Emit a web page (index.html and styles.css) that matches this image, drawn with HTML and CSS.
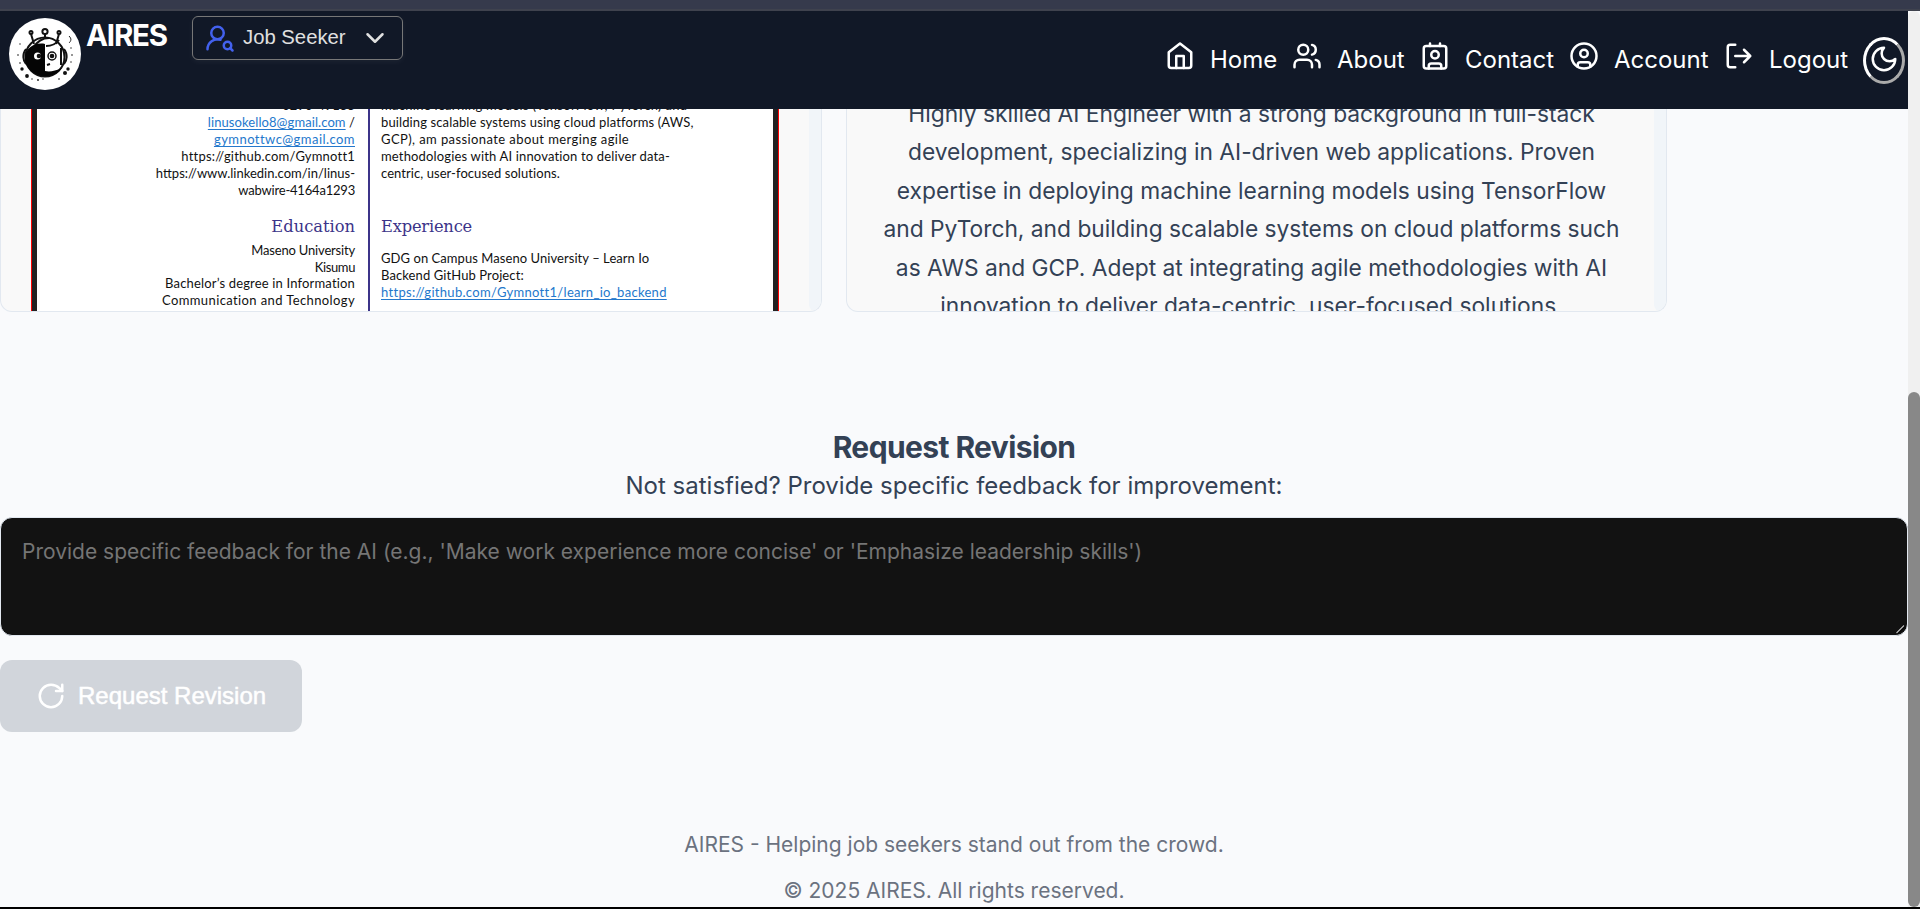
FILE: index.html
```html
<!DOCTYPE html>
<html lang="en">
<head>
<meta charset="utf-8">
<title>AIRES</title>
<link rel="stylesheet" href="styles.css">
</head>
<body>
<div class="window-edge"></div>
<div class="viewport">
  <div class="page">
    <header class="navbar">
      <svg class="logo" viewBox="0 0 72 72">
        <circle cx="36" cy="36" r="36" fill="#fff"/>
        <g fill="none" stroke="#111" stroke-width="2">
          <path d="M25 26L22 16M36 19v-3M47 26l3-10"/>
          <circle cx="22" cy="14.500" r="1.500"/><circle cx="36" cy="13.500" r="2.600"/><circle cx="50" cy="14.500" r="1.500"/>
          <circle cx="36" cy="39" r="19.500"/>
          <path d="M17 31c-4 5-3 12 0 15M55 31c4 5 3 12 0 15M52 30v17"/>
          <path d="M24 30c5-8 10-10 16-10M37 28c6 0 10-2 13-6M38 47l3-1"/>
        </g>
        <path d="M36 26C26 24 16 30 16 40c0 10 9 18 20 18 7 0 12-2 17-8-7 3-12 4-17 3z" fill="#050505"/>
        <circle cx="28.500" cy="38" r="3.500" fill="#fff"/><circle cx="30" cy="38" r="2.300" fill="#111"/>
        <circle cx="43" cy="38" r="4" fill="#fff" stroke="#111" stroke-width="1.500"/><circle cx="43" cy="38" r="2.300" fill="#111"/>
        <g fill="#111">
          <circle cx="13" cy="51" r="1.700"/><circle cx="18" cy="58" r="1.900"/><circle cx="59" cy="51" r="1.700"/><circle cx="56" cy="55" r="2"/>
          <circle cx="11" cy="26" r=".7"/><circle cx="9" cy="37" r=".8"/><circle cx="11" cy="45" r=".8"/><circle cx="62" cy="30" r=".7"/><circle cx="63" cy="37" r=".8"/><circle cx="62" cy="44" r=".7"/><circle cx="29" cy="62" r=".9"/><circle cx="34" cy="61" r=".7"/><circle cx="50" cy="61" r=".8"/><circle cx="23" cy="61" r=".7"/>
        </g>
        <path d="M60 18c3 3 2 5 0 7" fill="none" stroke="#222"/>
      </svg>
      <div class="brand">AIRES</div>
      <button class="role">
        <svg class="icon role-icon" viewBox="0 0 24 24"><circle cx="10" cy="8" r="5"/><path d="M2 21a8 8 0 0 1 10.434-7.620"/><circle cx="18" cy="18" r="3"/><path d="m22 22-1.900-1.900"/></svg>
        <span class="role-label">Job Seeker</span>
        <svg class="icon chevron" viewBox="0 0 24 24"><path d="m6 9 6 6 6-6"/></svg>
      </button>
      <nav class="links">
        <a class="link"><svg class="icon" viewBox="0 0 24 24"><path d="m3 9 9-7 9 7v10.500a2 2 0 0 1-2 2H5a2 2 0 0 1-2-2z"/><path d="M9 21.500V12h6v9.500"/></svg><span>Home</span></a>
        <a class="link"><svg class="icon" viewBox="0 0 24 24"><path d="M16 21v-2a4 4 0 0 0-4-4H6a4 4 0 0 0-4 4v2"/><circle cx="9" cy="7" r="4"/><path d="M22 21v-2a4 4 0 0 0-3-3.870M16 3.130a4 4 0 0 1 0 7.750"/></svg><span>About</span></a>
        <a class="link"><svg class="icon" viewBox="0 0 24 24"><path d="M16 2v2M8 2v2M7 22v-2a2 2 0 0 1 2-2h6a2 2 0 0 1 2 2v2"/><circle cx="12" cy="11" r="3"/><rect x="3" y="4" width="18" height="18" rx="2"/></svg><span>Contact</span></a>
        <a class="link"><svg class="icon" viewBox="0 0 24 24"><circle cx="12" cy="12" r="10"/><circle cx="12" cy="10" r="3"/><path d="M7 20.662V19a2 2 0 0 1 2-2h6a2 2 0 0 1 2 2v1.662"/></svg><span>Account</span></a>
        <a class="link"><svg class="icon" viewBox="0 0 24 24"><path d="M9 21H5a2 2 0 0 1-2-2V5a2 2 0 0 1 2-2h4M16 17l5-5-5-5M21 12H9"/></svg><span>Logout</span></a>
      </nav>
      <button class="theme"><svg class="icon" viewBox="0 0 24 24"><path d="M12 3a6 6 0 0 0 9 9 9 9 0 1 1-9-9Z"/></svg></button>
    </header>

    <section class="previews">
      <article class="card">
        <div class="sheet">
          <div class="side">
            <p class="l1">0290-49155</p>
            <p class="l2"><a>linusokello8@gmail.com</a> /</p>
            <p class="l3"><a>gymnottwc@gmail.com</a></p>
            <p class="l4">https://github.com/Gymnott1</p>
            <p class="l5">https://www.linkedin.com/in/linus-</p>
            <p class="l6">wabwire-4164a1293</p>
            <h3>Education</h3>
            <div class="school">
              <p class="l7">Maseno University</p>
              <p class="l8">Kisumu</p>
              <p class="l9">Bachelor’s degree in Information</p>
              <p class="l10">Communication and Technology</p>
            </div>
          </div>
          <div class="body">
            <p class="r1">machine learning models (TensorFlow, PyTorch) and</p>
            <p class="r2">building scalable systems using cloud platforms (AWS,</p>
            <p class="r3">GCP), am passionate about merging agile</p>
            <p class="r4">methodologies with AI innovation to deliver data-</p>
            <p class="r5">centric, user-focused solutions.</p>
            <h3>Experience</h3>
            <div class="job">
              <p class="r6">GDG on Campus Maseno University – Learn Io</p>
              <p class="r7">Backend GitHub Project:</p>
              <p class="r8"><a>https://github.com/Gymnott1/learn_io_backend</a></p>
            </div>
          </div>
        </div>
        <div class="track"></div>
      </article>
      <article class="card">
        <p class="summary">Highly skilled AI Engineer with a strong background in full-stack<br>development, specializing in AI-driven web applications. Proven<br>expertise in deploying machine learning models using TensorFlow<br>and PyTorch, and building scalable systems on cloud platforms such<br>as AWS and GCP. Adept at integrating agile methodologies with AI<br>innovation to deliver data-centric, user-focused solutions.</p>
        <div class="track"></div>
      </article>
    </section>

    <section class="revision">
      <h2>Request Revision</h2>
      <p class="hint">Not satisfied? Provide specific feedback for improvement:</p>
      <div class="field">
        <textarea class="feedback" placeholder="Provide specific feedback for the AI (e.g., 'Make work experience more concise' or 'Emphasize leadership skills')"></textarea>
        <svg class="grip" viewBox="0 0 12 12"><path d="M1.500 10.500l8-8" stroke="#000" stroke-width="3"/><path d="M1.500 10l7.500-7.500" stroke="#bbb" stroke-width="1.300"/></svg>
      </div>
      <button class="submit">
        <svg class="icon" viewBox="0 0 24 24"><path d="M21 12a9 9 0 1 1-9-9c2.520 0 4.930 1 6.740 2.740L21 8"/><path d="M21 3v5h-5"/></svg>
        <span>Request Revision</span>
      </button>
    </section>

    <footer class="footer">
      <p class="tagline">AIRES - Helping job seekers stand out from the crowd.</p>
      <p class="rights">© 2025 AIRES. All rights reserved.</p>
    </footer>
  </div>
  <div class="scrollbar"><div class="thumb"></div></div>
</div>
<div class="bottom-edge"></div>
</body>
</html>
```

FILE: styles.css
```css
* { box-sizing: border-box; }
body {
  margin: 0;
  height: 909px;
  overflow: hidden;
  display: flex;
  flex-direction: column;
  background: #f9fafc;
  font-family: Inter, sans-serif;
  font-size: 24px;
  color: #334155;
}
p, h2, h3 { margin: 0; white-space: nowrap; }
button { margin: 0; padding: 0; font-family: "Liberation Sans", sans-serif; }

.window-edge { flex: none; height: 11px; background: #363a4c; border-bottom: 2px solid #3f424e; }
.bottom-edge { flex: none; height: 2px; background: #000; }
.viewport { height: 896px; display: flex; }
.page { width: 1908px; height: 896px; overflow: hidden; }
.scrollbar { width: 12px; background: #f0f0f0; border-radius: 6px 6px 0 0; padding-top: 381px; }
.thumb { height: 515px; background: #888; border-radius: 6px; }

.icon {
  flex: none;
  width: 30px;
  height: 30px;
  fill: none;
  stroke: currentColor;
  stroke-width: 2;
  stroke-linecap: round;
  stroke-linejoin: round;
}

/* Navigation */
.navbar { display: flex; align-items: flex-start; height: 98px; padding-left: 9px; background: #111827; color: #fff; }
.logo { flex: none; width: 72px; height: 72px; margin-top: 7px; }
.brand { width: 106px; margin: 6px 0 0 5px; font-size: 29.500px; line-height: 36px; font-weight: 700; letter-spacing: -1.200px; }
.role {
  display: flex;
  align-items: center;
  width: 211px;
  height: 44px;
  margin-top: 5px;
  padding-left: 12px;
  border: 1px solid #777;
  border-radius: 6px;
  background: #111827;
  color: #e0e0e0;
  box-shadow: 0 2px 6px rgba(255, 255, 255, .05);
  font-size: 20.300px;
}
.role-icon { color: #4361ee; }
.role-label { width: 117px; margin-left: 8px; padding-bottom: 1px; text-align: left; white-space: nowrap; }
.links { display: grid; grid-template-columns: 127px 128px 149px 155px 139px; margin: 30px 0 0 762px; }
.link { display: flex; gap: 15px; }
.link span { padding-top: 1px; line-height: 36px; }
.theme {
  display: flex;
  align-items: center;
  justify-content: center;
  flex: none;
  width: 42px;
  height: 47px;
  margin-top: 26px;
  padding-bottom: 4px;
  border: 3px solid;
  border-color: #fff #aaa #aaa #fff;
  border-radius: 50%;
  background: none;
  color: #fff;
}

/* Preview cards */
.previews { display: flex; gap: 24px; height: 203px; }
.card {
  display: flex;
  justify-content: space-between;
  width: 822px;
  height: 203px;
  overflow: hidden;
  background: #f9f9f9;
  border: 1px solid #e2e8f0;
  border-top: 0;
  border-radius: 0 0 12px 12px;
}
.card:last-child { width: 821px; }
.track { flex: none; width: 12px; background: #f1f5f9; border-radius: 0 0 6px 6px; }
.sheet {
  display: flex;
  width: 746px;
  margin-left: 31px;
  background: #fff;
  border: solid #222;
  border-width: 0 5px;
  box-shadow: 1px 0 red, -1px 0 red;
  color: #111;
  font-family: Lato, sans-serif;
  font-size: 13px;
  line-height: 17px;
}
.side { display: flex; flex-direction: column; align-items: flex-end; width: 333px; margin-top: -12px; padding-right: 13px; border-right: 2px solid #3c3489; }
.body { display: flex; flex-direction: column; align-items: flex-start; margin-top: -12px; padding-left: 11px; }
.sheet a { color: #2478cc; text-decoration: underline; text-underline-offset: 2px; }
.sheet h3 { font: 16.300px/24px "DejaVu Serif", serif; color: #3c3489; }
.side h3 { margin-top: 16px; }
.body h3 { margin-top: 33px; letter-spacing: -.2px; }
.school { display: flex; flex-direction: column; align-items: flex-end; line-height: 16.700px; margin-top: 3px; }
.job { margin-top: 11px; }

/* Line tracking of the document text */
.l2 { letter-spacing: .08px; }
.l3 { letter-spacing: .45px; }
.l4 { letter-spacing: .2px; }
.l6 { letter-spacing: -.2px; }
.l7 { letter-spacing: -.18px; }
.l8 { letter-spacing: -.4px; }
.l9 { letter-spacing: .17px; }
.l10 { letter-spacing: .39px; }
.r1 { letter-spacing: .3px; }
.r2 { letter-spacing: .12px; }
.r3 { letter-spacing: .41px; }
.r4 { letter-spacing: .16px; }
.r5, .r6 { letter-spacing: .06px; }
.r7 { letter-spacing: .1px; }
.r8 { letter-spacing: .3px; }

.summary { flex: 1; padding-left: 2px; margin-top: -14px; font-size: 22.780px; line-height: 38.400px; text-align: center; }

/* Revision form */
.revision { padding-top: 114px; text-align: center; }
.revision h2 { font-size: 30px; line-height: 42px; font-weight: 700; letter-spacing: -.6px; }
.hint { line-height: 36px; }
.field { position: relative; margin-top: 13px; }
.feedback {
  display: block;
  width: 1908px;
  height: 119px;
  padding: 18px 21px;
  border: 1px solid #e2e8f0;
  border-radius: 12px;
  background: #121212;
  color: #fff;
  font: 21px/31px Inter, sans-serif;
  resize: none;
}
.feedback::placeholder { color: #757575; }
.grip { position: absolute; right: 1px; bottom: 1px; width: 12px; height: 12px; }
.submit {
  display: flex;
  align-items: center;
  gap: 12px;
  width: 302px;
  height: 72px;
  margin-top: 24px;
  padding-left: 36px;
  border: 0;
  border-radius: 12px;
  background: #d1d5db;
  color: #fff;
  font-size: 24px;
  white-space: nowrap;
}
.submit span { padding-bottom: 1px; -webkit-text-stroke: .5px #fff; }

/* Footer */
.footer { margin-top: 97px; text-align: center; font-size: 21px; color: #6b7280; }
.tagline { line-height: 32px; }
.rights { margin-top: 14px; line-height: 32px; }
```
